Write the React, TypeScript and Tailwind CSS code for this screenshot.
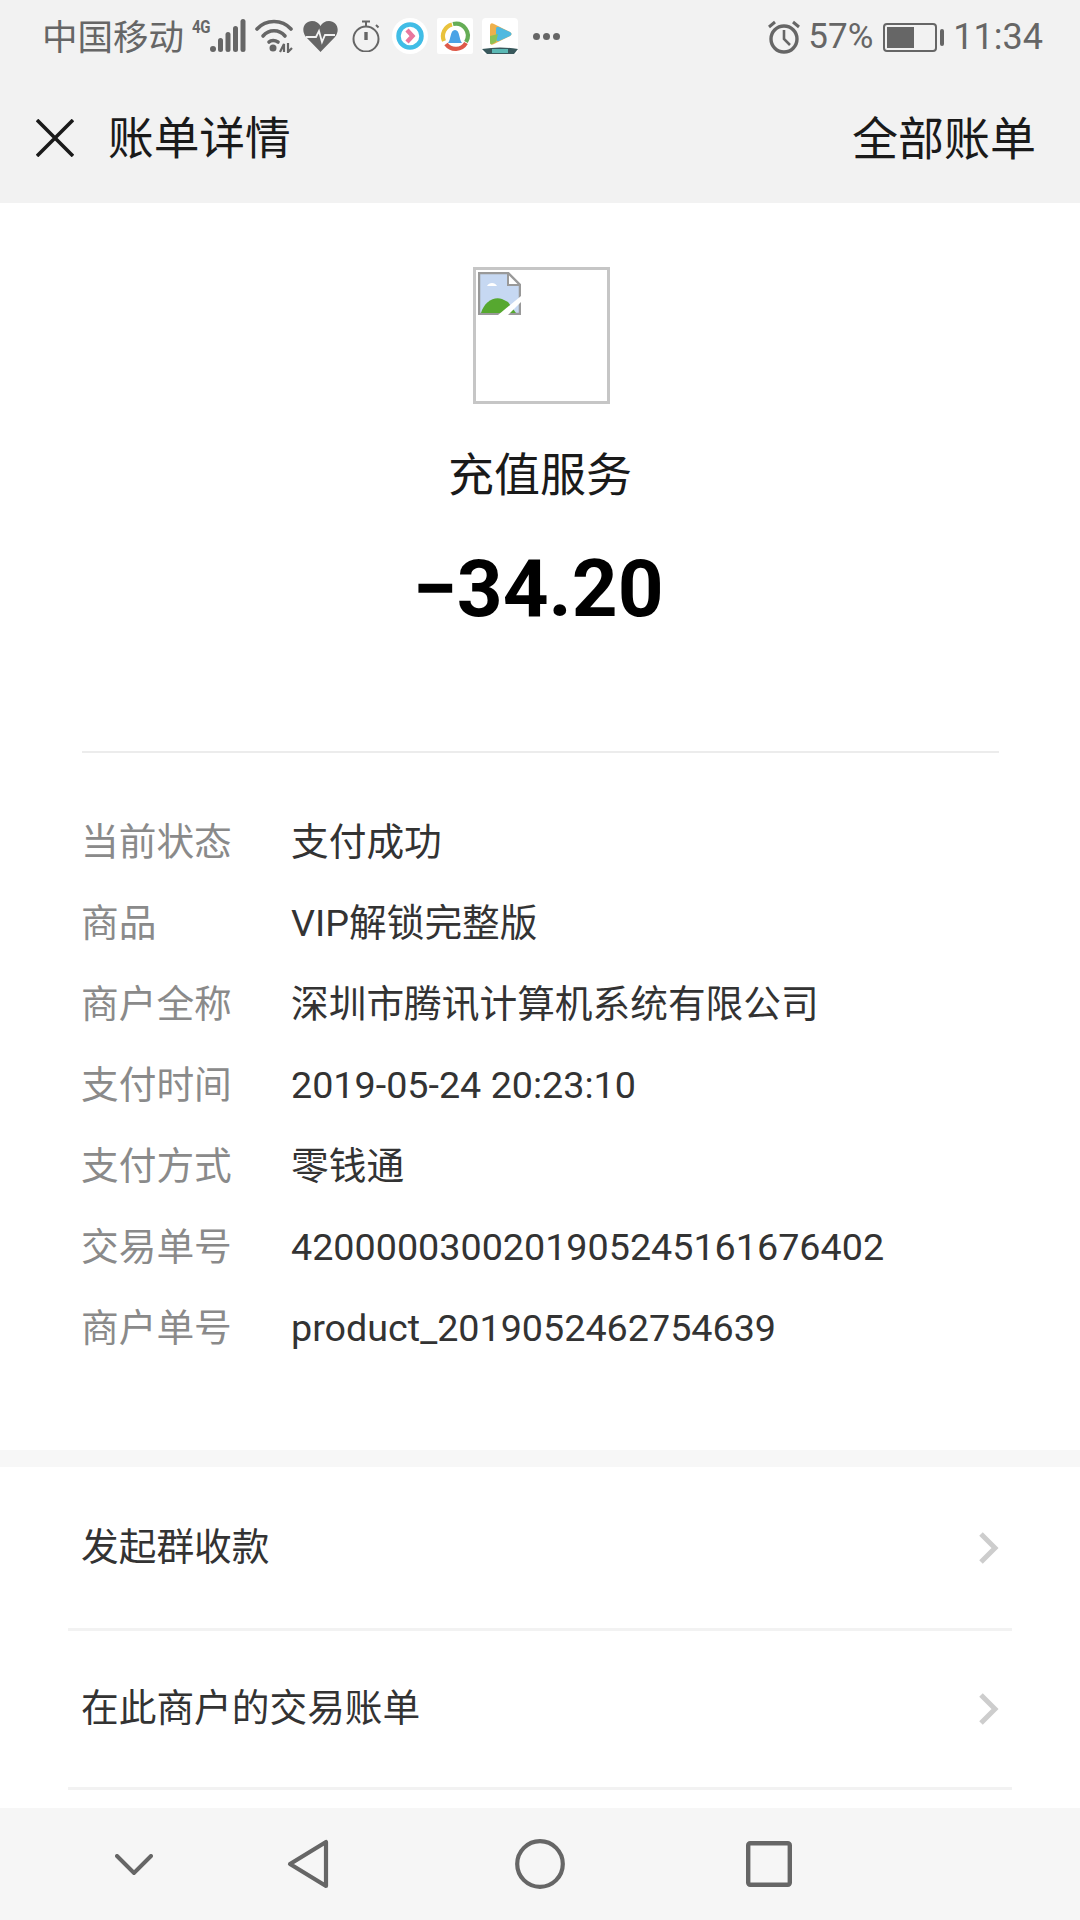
const sans = '[font-family:Roboto,"Noto_Sans_CJK_SC",sans-serif]';

const details: [string, string][] = [
  ['当前状态', '支付成功'],
  ['商品', 'VIP解锁完整版'],
  ['商户全称', '深圳市腾讯计算机系统有限公司'],
  ['支付时间', '2019-05-24 20:23:10'],
  ['支付方式', '零钱通'],
  ['交易单号', '4200000300201905245161676402'],
  ['商户单号', 'product_2019052462754639'],
];

function SignalIcon() {
  return (
    <span className="relative block h-[34px] w-[54px]">
      <span className="absolute left-0 top-[-2px] origin-top-left scale-y-[1.2] text-[15px] font-bold leading-[16px] tracking-[-0.3px] text-[#666]">4G</span>
      <svg className="absolute left-[18px] top-0" width="36" height="34" viewBox="0 0 36 34" fill="#666">
        <circle cx="3" cy="30" r="3" />
        <rect x="8" y="19" width="5" height="14" rx="2.5" />
        <rect x="15.5" y="13" width="5" height="20" rx="2.5" />
        <rect x="23" y="7" width="5" height="26" rx="2.5" />
        <rect x="30.5" y="0" width="5" height="33" rx="2.5" />
      </svg>
    </span>
  );
}

function WifiIcon() {
  return (
    <svg width="38" height="34" viewBox="0 0 38 34" fill="none" stroke="#666" strokeWidth="3.6" strokeLinecap="round">
      <path d="M2 10 C11 0 27 0 36 10" />
      <path d="M8 17 C14 10 24 10 30 17" />
      <path d="M14 23 C16 21 20 21 23 23" />
      <circle cx="18" cy="29" r="3.5" fill="#666" stroke="none" />
      <path d="M25 33 L29 25 V33 M33 24 V33 L37 29" strokeWidth="2.2" strokeLinecap="butt" />
    </svg>
  );
}

function HeartIcon() {
  return (
    <svg width="35" height="32" viewBox="0 0 35 32">
      <path d="M17.5 32 L3 17 C-3 9 2 1 9 1 C13 1 16 3 17.5 6 C19 3 22 1 26 1 C33 1 38 9 32 17 Z" fill="#666" />
      <path d="M3 17 H13 L16 11 L19 22 L22 15 H32" fill="none" stroke="#f2f2f2" strokeWidth="1.8" />
    </svg>
  );
}

function StopwatchIcon() {
  return (
    <svg width="28" height="32" viewBox="0 0 28 32" fill="none" stroke="#666" strokeWidth="2">
      <circle cx="14" cy="19" r="12.5" />
      <path d="M10 1.5 H18 M14 2 V6 M24 5 L26.5 7.5" />
      <path d="M14 12 V20" strokeWidth="3.4" />
    </svg>
  );
}

function PlayerBadge() {
  return (
    <svg width="36" height="36" viewBox="0 0 36 36" fill="none">
      <circle cx="18" cy="18" r="18" fill="#fff" />
      <circle cx="18" cy="18" r="11.5" stroke="#41bde6" strokeWidth="4.5" />
      <path d="M15 12 L20.5 18 L15 24" stroke="#e8789e" strokeWidth="4.4" />
    </svg>
  );
}

function CommunityBadge() {
  return (
    <svg width="36" height="36" viewBox="0 0 36 36" fill="none">
      <rect width="36" height="36" rx="2" fill="#fff" />
      <path d="M7 23 A12 12 0 0 1 15 6.5" stroke="#e9c23c" strokeWidth="4.2" />
      <path d="M16 6 A12 12 0 0 1 29 24" stroke="#65ad56" strokeWidth="4.2" />
      <path d="M29 25 A12 12 0 0 1 9 26" stroke="#de5a4a" strokeWidth="4.2" />
      <path d="M11 25 C14 22 13 12 18 12 C23 12 22 22 25 25 Z" fill="#4aa3e6" />
    </svg>
  );
}

function VideoBadge() {
  return (
    <svg width="36" height="36" viewBox="0 0 36 36" fill="none">
      <rect width="36" height="36" rx="4" fill="#fff" />
      <path d="M8 8 Q8 4 12 6 L28 14 Q31 16 28 18 L12 26 Q8 28 8 24 Z" fill="#eeb04c" />
      <path d="M14 11 Q14 8 17 9 L28 14 Q31 16 28 18 L17 23 Q14 24 14 21 Z" fill="#4fb9e0" />
      <path d="M8 18 L16 16 L14 24 L10 26 Q8 27 8 24 Z" fill="#8cc257" />
      <path d="M0 31 Q18 28 36 31 L32 36 H5 Z" fill="#39585c" />
      <rect x="10" y="31" width="16" height="4" fill="#5ab8b4" />
    </svg>
  );
}

function AlarmIcon() {
  return (
    <svg width="34" height="34" viewBox="0 0 34 34" fill="none" stroke="#666" strokeWidth="3.4">
      <circle cx="17" cy="19" r="13" />
      <path d="M17 10 V19 L23 25" strokeWidth="2.6" />
      <path d="M2 7 L8 2 M32 7 L26 2" strokeWidth="3" />
    </svg>
  );
}

function BatteryIcon() {
  return (
    <span className="flex items-center gap-[3px]">
      <span className="flex h-[29px] w-[54px] rounded-[4px] border-2 border-[#666] p-[2px]">
        <span className="block h-full w-[27px] bg-[#666]" />
      </span>
      <span className="block h-[17px] w-[4px] rounded-[2px] bg-[#666]" />
    </span>
  );
}

function BrokenImage() {
  return (
    <svg width="43" height="43" viewBox="0 0 43 43">
      <path d="M1 1 H30 L42 13 V42 H1 Z" fill="#c6d8f2" stroke="#999" strokeWidth="2.5" />
      <path d="M30 1 V13 H42 Z" fill="#fff" stroke="#999" strokeWidth="2" />
      <path d="M9 14 C11 10 17 10 19 14 Z" fill="#fff" />
      <path d="M3 41 C6 30 16 24 24 27 L30 30 L38 41 Z" fill="#56a82f" />
      <path d="M20 43 L43 24 V30 L30 43 Z" fill="#fff" />
    </svg>
  );
}

function Chevron() {
  return (
    <svg width="20" height="32" viewBox="0 0 20 32" fill="none" stroke="#cdcdcd" strokeWidth="5">
      <path d="M2 2 L16 16 L2 30" />
    </svg>
  );
}

export default function App() {
  return (
    <div className={`flex h-[1920px] w-[1080px] flex-col overflow-hidden bg-white ${sans}`}>
      <div className="h-[203px] shrink-0 bg-[#f2f2f2]">
        {/* System status bar */}
        <div className="flex h-[72px] items-center justify-between pl-[42px] pr-[37px] text-[#666]">
          <div className="flex items-center">
            <span className="translate-y-[2px] text-[35.5px] leading-[38px]">中国移动</span>
            <span className="ml-[8px]"><SignalIcon /></span>
            <span className="ml-[9px]"><WifiIcon /></span>
            <span className="ml-[10px]"><HeartIcon /></span>
            <span className="ml-[14px]"><StopwatchIcon /></span>
            <span className="ml-[12px]"><PlayerBadge /></span>
            <span className="ml-[9px]"><CommunityBadge /></span>
            <span className="ml-[9px]"><VideoBadge /></span>
            <span className="ml-[15px] flex gap-[3px]">
              <i className="block h-[7px] w-[7px] rounded-full bg-[#666]" />
              <i className="block h-[7px] w-[7px] rounded-full bg-[#666]" />
              <i className="block h-[7px] w-[7px] rounded-full bg-[#666]" />
            </span>
          </div>
          <div className="flex translate-y-[1px] items-center">
            <AlarmIcon />
            <span className="ml-[7px] text-[35px] leading-[38px]">57%</span>
            <span className="ml-[10px]"><BatteryIcon /></span>
            <span className="ml-[9px] text-[36px] leading-[38px]">11:34</span>
          </div>
        </div>
        {/* Page title bar */}
        <div className="flex h-[131px] items-center justify-between pl-[36px] pr-[44px] leading-[60px] text-[#1a1a1a]">
          <div className="flex items-center">
            <svg width="38" height="38" viewBox="0 0 38 38" fill="none" stroke="#1a1a1a" strokeWidth="3.6">
              <path d="M1 1 L37 37 M37 1 L1 37" />
            </svg>
            <span className="ml-[34px] translate-y-[2px] text-[45.7px]">账单详情</span>
          </div>
          <span className="translate-y-[1px] text-[46px]">全部账单</span>
        </div>
      </div>

      <main className="flex min-h-0 flex-1 flex-col overflow-hidden">
        {/* Payee and amount */}
        <div className="mt-[64px] flex flex-col items-center">
          <div className="ml-[3px] h-[137px] w-[137px] border-[3px] border-[#c6c6c6] p-[2px]">
            <BrokenImage />
          </div>
          <h1 className="mt-[41px] text-[46px] font-normal leading-[60px] text-[#1a1a1a]">充值服务</h1>
          <div className="mt-[34px] -translate-x-[2px] text-[80px] font-bold leading-[100px] text-black">−34.20</div>
        </div>

        {/* Transaction details */}
        <div className="ml-[82px] mr-[81px] mt-[112px] border-t-2 border-[#ececec] pt-[48px]">
          {details.map(([label, value]) => (
            <div key={label} className="-ml-[1px] flex h-[81px] items-center text-[37.7px] leading-[50px]">
              <span className="w-[210px] shrink-0 text-[#8a8a8a]">{label}</span>
              <span className="text-[#333]">{value}</span>
            </div>
          ))}
        </div>

        <div className="mt-[82px] h-[17px] shrink-0 bg-[#f7f7f7]" />

        {/* Follow-up actions */}
        <div className="mx-[68px]">
          <div className="flex h-[164px] items-center justify-between border-b-[3px] border-[#f2f2f2] pl-[13px] pr-[13px] text-[37.7px] leading-[50px] text-[#333]">
            <span className="-translate-y-[1px]">发起群收款</span>
            <Chevron />
          </div>
          <div className="flex h-[159px] items-center justify-between border-b-[3px] border-[#f2f2f2] pl-[13px] pr-[13px] text-[37.7px] leading-[50px] text-[#333]">
            <span className="-translate-y-[1px]">在此商户的交易账单</span>
            <Chevron />
          </div>
        </div>
      </main>

      {/* System navigation bar */}
      <nav className="flex h-[112px] shrink-0 items-center bg-[#f6f6f6] pl-[115px]">
        <svg width="38" height="21" viewBox="0 0 38 21" fill="none" stroke="#666" strokeWidth="4" strokeLinecap="round">
          <path d="M2 2 L19 19 L36 2" />
        </svg>
        <svg className="ml-[134px]" width="42" height="50" viewBox="0 0 42 50" fill="none" stroke="#666" strokeWidth="4.2" strokeLinejoin="round">
          <path d="M39 3 V47 L3 25 Z" />
        </svg>
        <svg className="ml-[186px]" width="50" height="50" viewBox="0 0 50 50" fill="none" stroke="#666" strokeWidth="4.2">
          <circle cx="25" cy="25" r="22.8" />
        </svg>
        <svg className="ml-[181px]" width="46" height="46" viewBox="0 0 46 46" fill="none" stroke="#666" strokeWidth="4.4" strokeLinejoin="round">
          <rect x="2.2" y="2.2" width="41.6" height="41.6" rx="2" />
        </svg>
      </nav>
    </div>
  );
}
